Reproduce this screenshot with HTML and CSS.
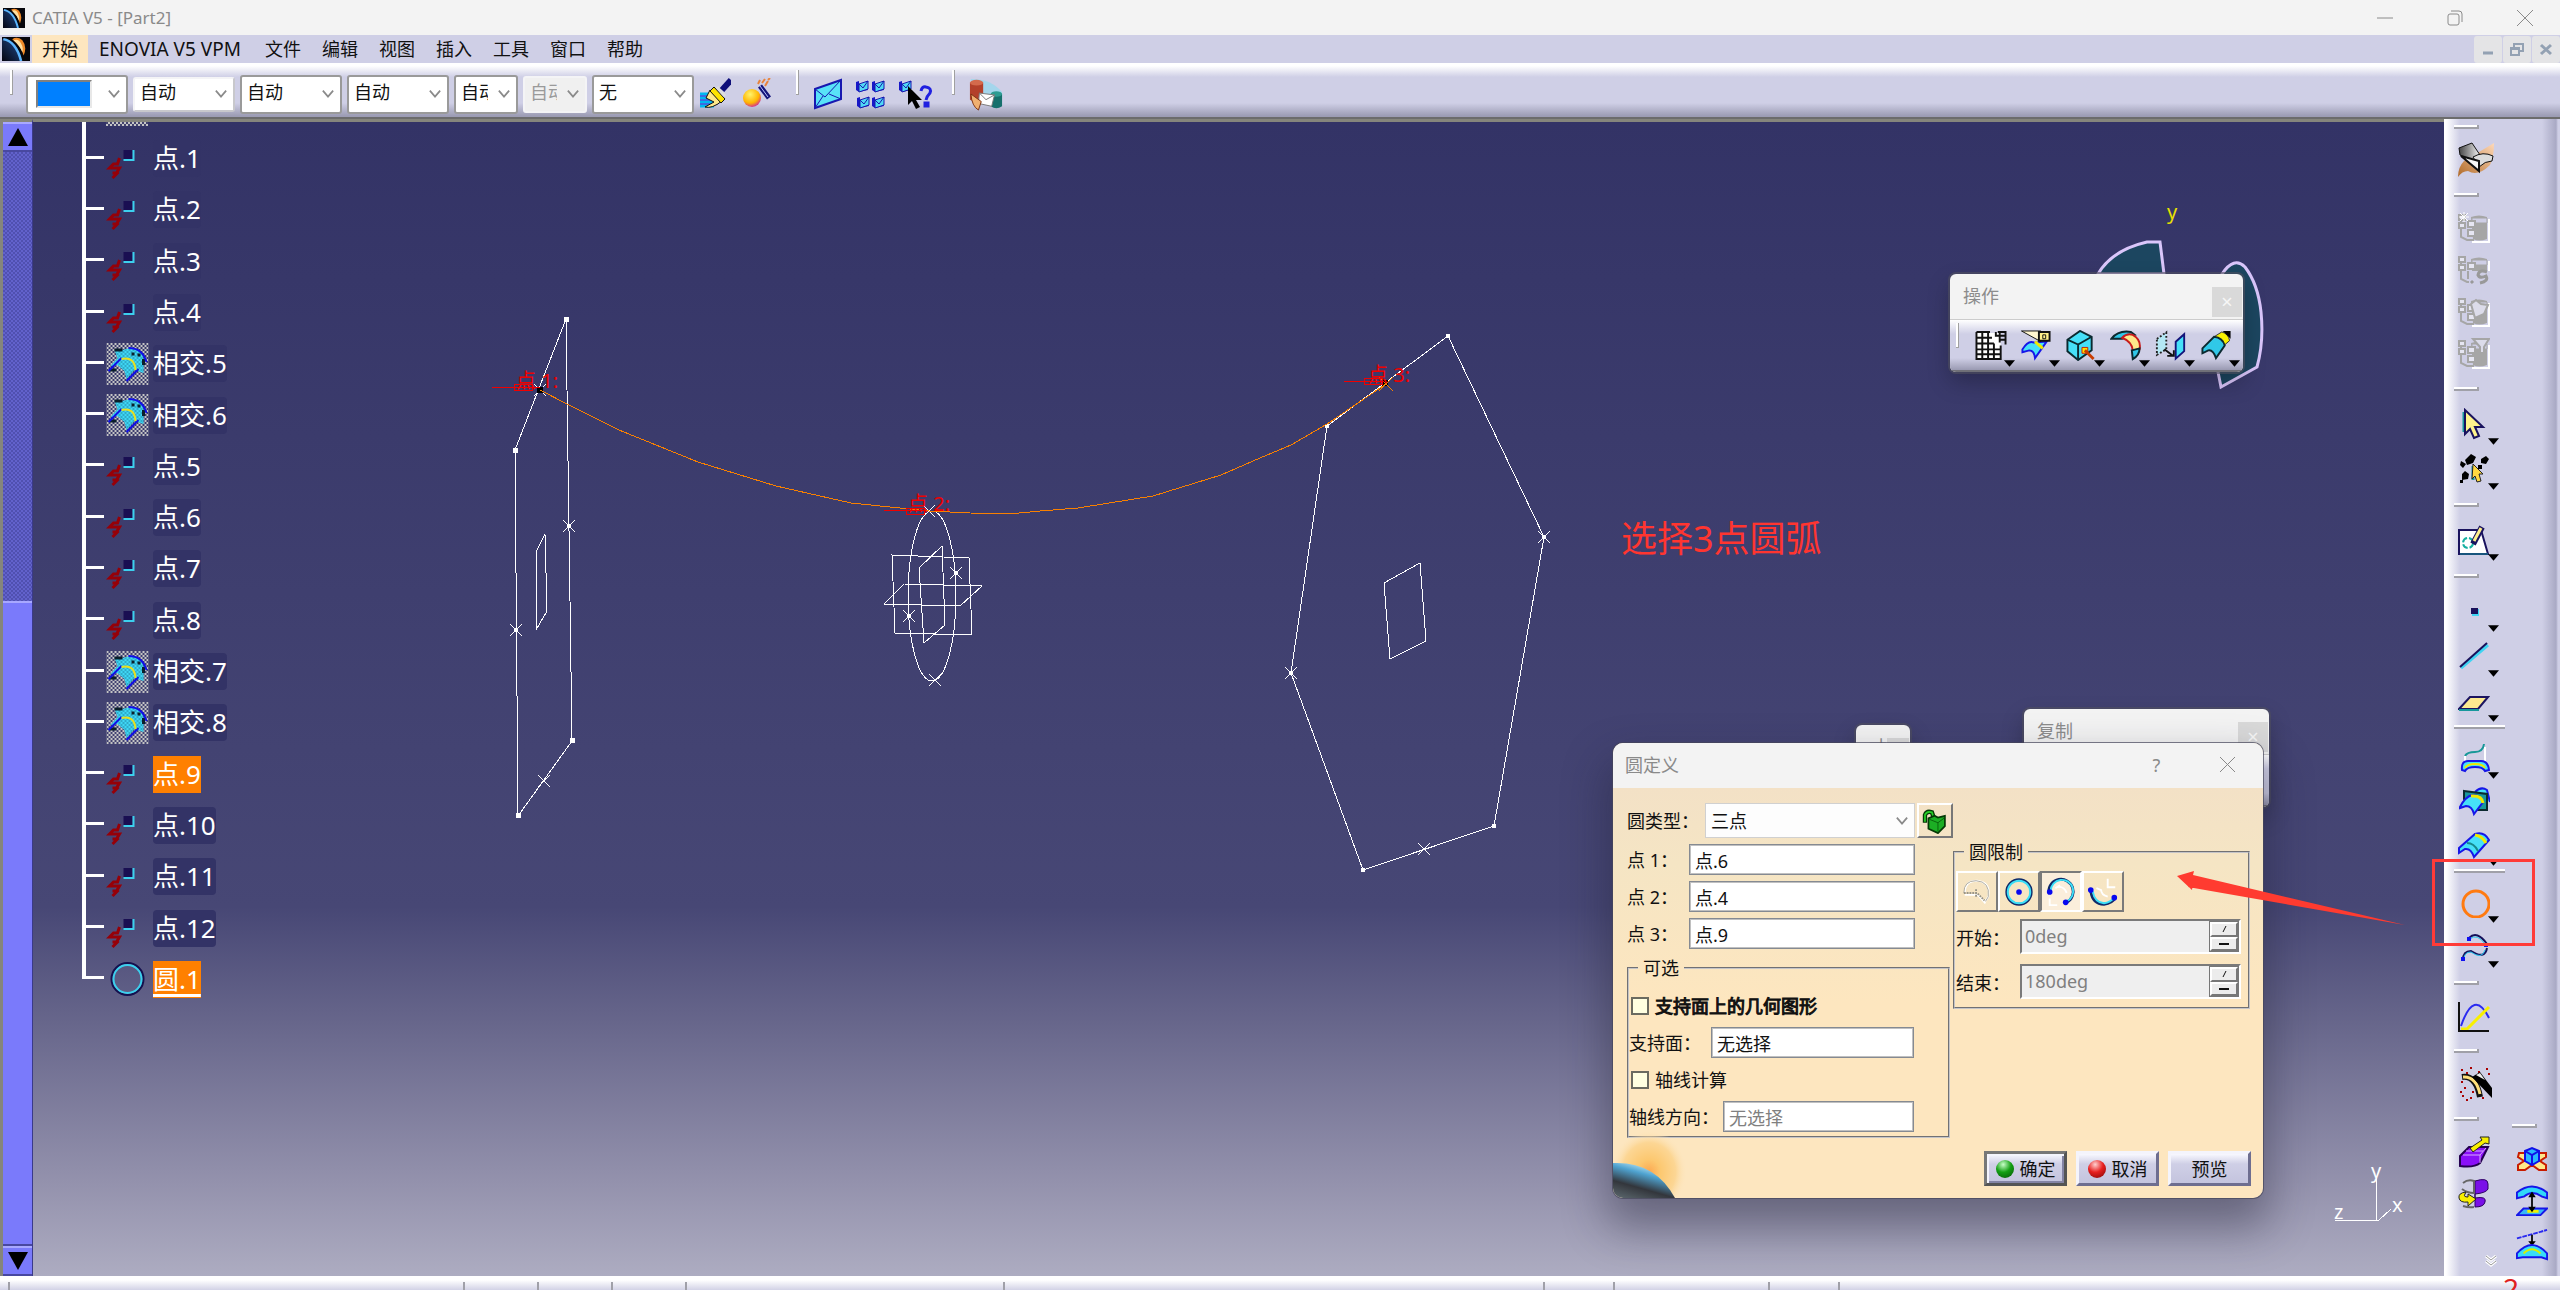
FILE: index.html
```html
<!DOCTYPE html>
<html lang="zh-CN">
<head>
<meta charset="utf-8">
<title>CATIA V5 - [Part2]</title>
<link rel="stylesheet" href="styles.css">
</head>
<body>
<svg class="defs" aria-hidden="true">
  <defs>
    <linearGradient id="globe" x1="0" y1="1" x2="1" y2="0"><stop offset="0" stop-color="#050510"/><stop offset="0.6" stop-color="#16305c"/><stop offset="1" stop-color="#58b4f0"/></linearGradient>
    <linearGradient id="metal" x1="0" x2="1"><stop offset="0" stop-color="#444"/><stop offset="1" stop-color="#f4f4f4"/></linearGradient>
    <linearGradient id="copper" x1="0" x2="1" y1="1" y2="0"><stop offset="0" stop-color="#b06a28"/><stop offset="1" stop-color="#ffd9b8"/></linearGradient>
    <radialGradient id="ball" cx="0.4" cy="0.3" r="0.8"><stop offset="0" stop-color="#fff36a"/><stop offset="0.6" stop-color="#ffb400"/><stop offset="1" stop-color="#c400c4"/></radialGradient>
    <radialGradient id="sun"><stop offset="0" stop-color="#fda850"/><stop offset="0.3" stop-color="#fcc870"/><stop offset="0.7" stop-color="#fcd694"/><stop offset="1" stop-color="#fde6bf" stop-opacity="0"/></radialGradient>
    <linearGradient id="planet" x1="0" y1="1" x2="0.5" y2="0"><stop offset="0" stop-color="#5d6a70"/><stop offset="0.4" stop-color="#33363c"/><stop offset="0.75" stop-color="#4fa3d0"/><stop offset="1" stop-color="#c8ecf8"/></linearGradient>
    <pattern id="dots" width="4" height="4" patternUnits="userSpaceOnUse"><path d="M0 0h2v2H0zM2 2h2v2H2z" fill="#c4c4c4"/></pattern>
    <pattern id="dither" width="4" height="4" patternUnits="userSpaceOnUse"><path d="M0 0h2v2H0zM2 2h2v2H2z" fill="#1f7f9c"/></pattern>
  </defs>
  <symbol id="i-app" viewBox="0 0 22 22" preserveAspectRatio="none"><path fill="#07070c" d="M0 0h22v22H0z"/><path fill="url(#globe)" d="M0 2q10 2 15 20H0z"/><path d="M1 2q10 2 14 20" fill="none" stroke="#5cb6ff" stroke-width="2"/><path d="M8 2q4-3 8 1 4 6 1 14-2-9-9-15z" fill="#f08a28"/><path d="M9 3q4-2 6 3 2 4 1 8-2-6-7-11z" fill="#ffe0a0"/></symbol>
  <symbol id="i-chev" viewBox="0 0 14 10"><path d="M1 1l6 7 6-7" fill="none" stroke="currentColor" stroke-width="2"/></symbol>
  <symbol id="i-drop" viewBox="0 0 12 7"><path d="M0 0h12L6 7z"/></symbol>
  <symbol id="t-point" viewBox="0 0 42 42"><path fill="#1a0f52" d="M17 12h9v9h-9z"/><path d="M17 22h10V12" fill="none" stroke="#3cd0ee" stroke-width="2"/><path d="M13 20l-2 6H7l-4 4h10l-3 5H6M12 34l-6 6" fill="none" stroke="#960008" stroke-width="3"/></symbol>
  <symbol id="t-inter" viewBox="0 0 42 42"><path fill="url(#dots)" d="M0 0h42v42H0z"/><path d="M8 7h8l8-2q10 1 13 10v15l-9-3-8 9-2-8-7-6-7 1 7-8z" fill="#3fd7f5"/><path d="M8 7h8l8-2q10 1 13 10v15l-9-3-8 9-2-8-7-6-7 1 7-8z" fill="url(#dither)" opacity="0.5"/><path d="M8 7h8M25 11h3M31 12h3M37 16v6M3 27h7" stroke="#0b1f2a" stroke-width="3"/><path d="M22 5q14 0 18 14M2 28L15 15M20 38l12-12" fill="none" stroke="#1010e8" stroke-width="2"/><path d="M15 16q13-3 14 11" fill="none" stroke="#e8e020" stroke-width="2"/></symbol>
  <symbol id="t-circle" viewBox="0 0 42 42"><circle cx="21" cy="21" r="16" fill="none" stroke="#14104e" stroke-width="2"/><circle cx="21" cy="21" r="14" fill="none" stroke="#3cd0ee" stroke-width="2"/></symbol>
  <symbol id="i-brush" viewBox="0 0 32 32"><path d="M1 16h15M1 20h16M1 24h16M1 28h14" stroke="#00b8f0" stroke-width="3"/><path d="M1 18h14M1 22h14M1 26h18" stroke="#1414d8" stroke-width="1"/><path d="M11 12l12 11q-10 8-17 6l9-5-8-4z" fill="#ffe98a" stroke="#111"/><path d="M15 9l11 12-4 4L11 13z" fill="#ffe400" stroke="#111"/><path d="M18 9l8 9" stroke="#ddd" stroke-width="3"/><path d="M23 12L32 2" stroke="#10107a" stroke-width="6"/></symbol>
  <symbol id="i-wand" viewBox="0 0 32 32"><circle cx="10" cy="20" r="9" fill="url(#ball)"/><path d="M18 8l9 12" stroke="#14147a" stroke-width="5"/><path d="M18 8l8 11" stroke="#b8c4ff"/><path d="M16 6l2-4M20 5l3-4M23 8l3-5M26 2l2-2" stroke="#e8843c" stroke-width="2"/></symbol>
  <symbol id="i-mail" viewBox="0 0 32 32"><path d="M3 11L29 2v19L3 30z" fill="#58e2f8" stroke="#1818b0" stroke-width="2"/><path d="M3 11l10 8L29 2M3 30l8-12M29 21l-12-5" fill="none" stroke="#1818b0"/></symbol>
  <symbol id="i-mail-s" viewBox="0 0 16 16"><path d="M1 4l3-1v5l9-5v9l-9 2-3-2z" fill="#1818c8"/><path d="M4 6l9-3v8l-9 3z" fill="#50d8f4" stroke="#1818b0"/><path d="M4 6l4 4 5-7" fill="none" stroke="#1818b0"/></symbol>
  <symbol id="i-mails" viewBox="0 0 32 32"><use href="#i-mail-s" x="0" y="0" width="16" height="16"/><use href="#i-mail-s" x="16" y="0" width="16" height="16"/><use href="#i-mail-s" x="1" y="16" width="16" height="16"/><use href="#i-mail-s" x="16" y="16" width="16" height="16"/></symbol>
  <symbol id="i-help" viewBox="0 0 36 32"><use href="#i-mail-s" x="0" y="0" width="16" height="16"/><path d="M10 8v19l4-4 4 8 4-2-4-7h6z"/><path d="M23 13q1-5 5-4q6 1 4 6q-3 3-4 7M27 25h3v3h-3z" fill="none" stroke="#2020e0" stroke-width="3"/></symbol>
  <symbol id="i-db" viewBox="0 0 36 36"><path d="M2 2q22 0 33 14v8L2 14z" fill="#a4d6ec"/><path d="M1 6q7-4 14 0v18q-7 4-14 0z" fill="#b3402a"/><ellipse cx="8" cy="6" rx="7" ry="3" fill="#d46a4c"/><path d="M23 18q6-3 12 0v13q-6 4-12 0z" fill="#16706c"/><ellipse cx="29" cy="18" rx="6" ry="3" fill="#2e9c92"/><path d="M11 17l16 2-3 12-14-3z" fill="#fff" stroke="#777"/><path d="M11 17l7 7 9-5" fill="none" stroke="#777"/><path d="M2 18q1 13 8 17l3-9z" fill="#f0b070" stroke="#7a3010"/></symbol>
  <symbol id="i-gsd" viewBox="0 0 36 36"><path d="M0 35q0-10 6-16l30-18q0 14-4 22-12 12-22 6-6 0-10 6z" fill="url(#copper)"/><path d="M1 6l13-5 8 12-7 7L2 13z" fill="url(#metal)" stroke="#111"/><path d="M15 15q10-6 20-1l-1 5q-7 0-13 6z" fill="#dcdcdc" stroke="#111"/><path d="M3 14l18 5v10z" fill="#f7f7f7" stroke="#111" stroke-width="2"/></symbol>
  <symbol id="i-cat-base" viewBox="0 0 32 32"><path d="M13 5q8-3 16 0v22q-8 3-14 0z" fill="#a6a6a6"/><path d="M14 6h15v5H14z" fill="#cfcfe6" stroke="#a6a6a6"/><path d="M3 7v18l6 3h7" fill="none" stroke="#a6a6a6" stroke-width="2"/><path d="M1 3h6v5H1zM1 11h6v5H1zM10 9h7v6h-7zM10 18h7v6h-7z" fill="#e6e6f2" stroke="#a6a6a6" stroke-width="2"/><path d="M14 30h17V7" fill="none" stroke="#fff" stroke-width="2"/></symbol>
  <symbol id="i-cat1" viewBox="0 0 32 32"><use href="#i-cat-base"/><path d="M6 0v10M1 5h10M2 1l8 8M10 1L2 9" stroke="#fff" stroke-width="1"/></symbol>
  <symbol id="i-cat2" viewBox="0 0 32 32"><use href="#i-cat-base"/><path d="M11 17h21v15H11z" fill="#cfcfe6"/><path d="M29 18q-8-3-9 3q2 4 8 1q3 5-6 7M13 27l2 2" fill="none" stroke="#999" stroke-width="3"/></symbol>
  <symbol id="i-cat3" viewBox="0 0 32 32"><use href="#i-cat-base"/><path d="M13 8l5-4 5 4 7 1-4 9-9 4z" fill="#dcdcea" stroke="#a6a6a6" stroke-width="2"/></symbol>
  <symbol id="i-cat4" viewBox="0 0 32 32"><use href="#i-cat-base"/><path d="M15 1h16l-5 8v6h-4V9z" fill="#dcdcea" stroke="#a6a6a6" stroke-width="2"/></symbol>
  <symbol id="i-arrow" viewBox="0 0 32 32"><path d="M6 4v20M14 22l3 8" stroke="#17989c" stroke-width="3"/><path d="M7 2l18 17h-8l4 9-5 2-4-9-5 5z" fill="#fff48c" stroke="#19125e" stroke-width="2"/></symbol>
  <symbol id="i-blob" viewBox="0 0 32 32"><path d="M13 1l5 3-3 6-6 2-2-5zM28 3l3 3-3 5-5-1v-4zM3 8l5 3-3 4-3-3zM7 18l4 3-1 5-6 1v-6zM2 27h3v3H2zM20 12h4v4h-4z"/><path d="M15 13v14" stroke="#17989c" stroke-width="3"/><path d="M15 11l10 10h-4l2 7-4 1-2-6-3 3z" fill="#ffd840" stroke="#222" stroke-width="1"/></symbol>
  <symbol id="i-sketch" viewBox="0 0 32 32"><path d="M1 6h22l7 24H1z" fill="#fff" stroke="#19125e" stroke-width="2"/><path d="M2 30h28" stroke="#17989c"/><circle cx="10" cy="19" r="5" fill="none" stroke="#17b0a0" stroke-width="2" stroke-dasharray="6 2"/><path d="M15 20L24 3" stroke="#19125e" stroke-width="6"/><path d="M16 17l7-13" stroke="#fff08a" stroke-width="3"/></symbol>
  <symbol id="i-dot" viewBox="0 0 32 32"><path d="M14 14h7v7h-7z" fill="#3ed4f2"/><path d="M13 13h7v6h-7z" fill="#19105a"/></symbol>
  <symbol id="i-line" viewBox="0 0 32 32"><path d="M3 28L30 5" stroke="#3ed4f2" stroke-width="3"/><path d="M2 27L29 3" stroke="#19105a" stroke-width="2"/></symbol>
  <symbol id="i-plane" viewBox="0 0 32 32"><path d="M12 12h18L20 24H1z" fill="#fdea90" stroke="#1c1460" stroke-width="2"/><path d="M1 25h20" stroke="#17989c" stroke-width="2"/></symbol>
  <symbol id="i-proj" viewBox="0 0 32 32"><path d="M7 14q2-4 10-4q8 0 9-8" fill="none" stroke="#179898" stroke-width="2"/><path d="M7 14v9M27 5v16" stroke="#fff" stroke-width="2"/><path d="M4 28q-1-9 6-9h13q7 0 8 9l-4 1q-2-4-10-4t-10 4z" fill="#46e0f8" stroke="#1616e8" stroke-width="2"/><path d="M7 26q2-4 10-4t10 4" fill="none" stroke="#f0e800" stroke-width="2"/></symbol>
  <symbol id="i-inter" viewBox="0 0 32 32"><path d="M17 5q6-6 12-2l3 12" fill="#46e0f8" stroke="#1616e8" stroke-width="2"/><path d="M6 4l23 3v16H18L6 12z" fill="#17989c" stroke="#0b2a30" stroke-width="2"/><path d="M2 20q5-10 12-12q9 0 11 7l-9 12q-2-8-8-8l-6 2z" fill="#46e0f8" stroke="#1616e8" stroke-width="2"/><path d="M13 9q11-1 12 7" fill="none" stroke="#f0e800" stroke-width="3"/></symbol>
  <symbol id="i-surf" viewBox="0 0 32 32"><path d="M1 18L17 4q9-3 14 6L16 27q-3-9-9-8l-6 4z" fill="#46e0f8" stroke="#1616e8" stroke-width="2"/><path d="M17 5q7 1 11 8" fill="none" stroke="#f0e800" stroke-width="3"/><path d="M9 13q7 0 11 8" fill="none" stroke="#16888c" stroke-width="2"/></symbol>
  <symbol id="i-circ" viewBox="0 0 32 32"><circle cx="18" cy="18" r="13" fill="none" stroke="#ff7a10" stroke-width="3"/></symbol>
  <symbol id="i-spline" viewBox="0 0 32 32"><path d="M5 29q0-9 8-9q14 9 16-3M11 7q8-8 18 6" fill="none" stroke="#15105a" stroke-width="2"/><path d="M6 28q0-7 7-7q11 8 14-2M12 8q7-6 15 5" fill="none" stroke="#28c8f0" stroke-width="1"/><path d="M3 26h4v4H3zM9 6h4v4H9zM26 12h4v4h-4z" fill="#1010f0"/></symbol>
  <symbol id="i-graph" viewBox="0 0 32 32"><path d="M3 26Q16-12 31 18" fill="none" stroke="#2a2af0" stroke-width="2"/><path d="M3 29h6L31 7" fill="none" stroke="#f8f000" stroke-width="3"/><path d="M1 2v29h30" fill="none" stroke="#111" stroke-width="2"/></symbol>
  <symbol id="i-spray" viewBox="0 0 36 36"><path d="M3 4h2M12 2h2M20 6h2M28 3h2M3 16h2M4 30h2M14 26h2M6 22h2M12 32h2M24 32h2M30 8h2M2 26h2M8 34h2M8 7h2" stroke="#a80000" stroke-width="2"/><path d="M4 11q14-2 18 20" fill="none" stroke="#111" stroke-width="6"/><path d="M5 11q13-1 17 17" fill="none" stroke="#ffe07a" stroke-width="3"/><path d="M14 11l8-5 12 16v10z"/><path d="M18 9l4-2 5 7z" fill="#eee"/></symbol>
  <symbol id="i-extr" viewBox="0 0 32 32"><path d="M2 20l9-9h19l-8 16q-6 5-20 3z" fill="#8a10f8" stroke="#240050" stroke-width="2"/><path d="M5 19h17l6-7M8 15h17M22 19v8" fill="none" stroke="#d8a8ff" stroke-width="1"/><path d="M12 12L24 4l-2-3h9v7l-4-1-12 9z" fill="#f8f000" stroke="#222"/></symbol>
  <symbol id="i-cyl" viewBox="0 0 32 32"><path d="M17 3q13-4 13 3v5q-2 4-13 5v4q12-2 10 4-1 5-10 5z" fill="#7a10e8" stroke="#2c0060"/><path d="M5 5q5-4 11-2M4 11q5 4 12 4M5 28q6 2 11 1M16 2v14" fill="none" stroke="#666" stroke-width="2"/><path d="M8 14q-8 1-7 6t9 4v4l8-7-8-5v3q-5 0-3-3z" fill="#f8f000" stroke="#222"/></symbol>
  <symbol id="i-star" viewBox="0 0 32 32"><path d="M3 10h7l6 5 7-5h7v4l-6 4 6 4v5h-7l-7-5-7 5H2v-5l6-4-6-4z" fill="#ffe88a" stroke="#c81c00" stroke-width="2"/><path d="M9 8l7-3 7 3v10l-7 4-7-4z" fill="#28b8ff" stroke="#1010e8" stroke-width="2"/><path d="M9 8l7 4 7-4M16 12v9" fill="none" stroke="#1010e8" stroke-width="2"/></symbol>
  <symbol id="i-dist" viewBox="0 0 34 34"><path d="M1 14V8q16-13 32 0v6l-6-2q-10-7-18 0z" fill="#30d8f8" stroke="#1616e8" stroke-width="2"/><path d="M8 25h25l-7 7H1z" fill="#38b8f8" stroke="#1616e8" stroke-width="2"/><path d="M12 28h12" stroke="#f0f000" stroke-width="3"/><path d="M17 9v17" stroke="#111" stroke-width="2"/><path d="M17 7l4 6h-8zM17 29l4-6h-8z"/></symbol>
  <symbol id="i-curv" viewBox="0 0 34 34"><path d="M1 10L33 1" stroke="#2828f0" stroke-width="2" stroke-dasharray="5 1"/><path d="M17 6v9" stroke="#111" stroke-width="2"/><path d="M17 18l4-5h-8z"/><path d="M1 31V26q16-18 32 0v6l-6-2H7z" fill="#38dcf8" stroke="#1616e8" stroke-width="2"/><path d="M8 26q9-9 18 0" fill="none" stroke="#d8f000" stroke-width="2"/></symbol>
  <symbol id="i-more" viewBox="0 0 12 12"><path d="M1 1l5 4 5-4M1 6l5 4 5-4" fill="none" stroke="#fff" stroke-width="3"/><path d="M1 1l5 4 5-4M1 6l5 4 5-4" fill="none" stroke="#999"/></symbol>
  <symbol id="i-join" viewBox="0 0 32 32"><path d="M1 3h25v27H1z" fill="#fff"/><path d="M1 2v28h25V16M1 2h14M7 2v28M13 2v28M19 14v16M1 8h16M1 14h18M1 20h25M1 25h25M23 2h8v13M21 2v4h9M25 2v11M25 10h6" fill="none" stroke="#111" stroke-width="2"/></symbol>
  <symbol id="i-cut" viewBox="0 0 32 32"><path d="M2 20q6-10 12-7l13-1-12 17q-1-8-6-8l-7 2z" fill="#46e0f8" stroke="#1616e8" stroke-width="2"/><path d="M15 12l8 7" stroke="#f0e800" stroke-width="3"/><path d="M1 1h20v11z" fill="#fff6d0" stroke="#111"/><path d="M19 2h11v9H19z" fill="#fff08a" stroke="#111" stroke-width="2"/><path d="M23 5h3v4h-3z" fill="none" stroke="#111"/></symbol>
  <symbol id="i-cube" viewBox="0 0 32 32"><path d="M2 10L15 1l12 6v14L13 31 2 22z" fill="#46e0f8" stroke="#0b2a30" stroke-width="2"/><path d="M2 10l11 5 14-8M13 15v16" fill="none" stroke="#0b2a30" stroke-width="2"/><path d="M17 18h6v6h-6z" fill="#ffe000" stroke="#c82000"/><path d="M20 21l9 9" stroke="#c83c00" stroke-width="3"/></symbol>
  <symbol id="i-fillet" viewBox="0 0 32 32"><path d="M1 9q7-9 20-7l4 3-13 4z" fill="#30c8e8" stroke="#0b2a30" stroke-width="2"/><path d="M12 8q5-5 11-3 9 5 7 15l-7 1q-1-9-11-13z" fill="#ffe88a" stroke="#c81c1c" stroke-width="2"/><path d="M22 21l8-2q0 7-7 11z" fill="#30c8e8" stroke="#0b2a30" stroke-width="2"/></symbol>
  <symbol id="i-sym" viewBox="0 0 34 32"><path d="M2 9l10-7v18L2 26z" fill="#b4e8f4" stroke="#222" stroke-width="2" stroke-dasharray="2 2"/><path d="M22 12l9-8v18l-9 8z" fill="#46e0f8" stroke="#14147a" stroke-width="2"/><path d="M10 20l9 7M13 27h7v-6" fill="none" stroke="#111" stroke-width="2"/></symbol>
  <symbol id="i-extrap" viewBox="0 0 32 32"><path d="M14 7l8-5q7 2 8 9l-7 6q-2-8-9-10z" fill="#f8f000" stroke="#333"/><path d="M2 19L14 7q9 1 11 9L16 29q-3-9-8-8l-6 3z" fill="#30c8e8" stroke="#0b2a30" stroke-width="2"/><path d="M23 1h8v8z"/></symbol>
  <symbol id="i-lock" viewBox="0 0 30 30"><path d="M4 17V8q2-5 8-3l2 6" fill="none" stroke="#063a06" stroke-width="5"/><path d="M4 16V8q2-5 8-3l2 6" fill="none" stroke="#28d028" stroke-width="2"/><path d="M8 12l7-3 4 2 8-2v12l-8 8-11-5z" fill="#1cae24" stroke="#063a06" stroke-width="2"/><path d="M9 13l10 4 8-6M19 17v10" fill="none" stroke="#085a08"/></symbol>
  <symbol id="i-c1" viewBox="0 0 34 34"><path d="M4 18q0-13 13-13 15 2 12 17-2 4-5 6M4 20h14l8 9" fill="none" stroke="#fff" stroke-width="2"/><path d="M3 18q0-13 13-13 15 1 13 17l-3 5" fill="none" stroke="#aaa69a" stroke-width="1"/><path d="M3 18h14l8 8M16 14v8" fill="none" stroke="#999588" stroke-width="2" stroke-dasharray="2 1"/></symbol>
  <symbol id="i-c2" viewBox="0 0 34 34"><circle cx="17" cy="17" r="13" fill="none" stroke="#102a68" stroke-width="3"/><circle cx="17" cy="17" r="12" fill="none" stroke="#3ce0f8" stroke-width="2"/><circle cx="17" cy="17" r="3" fill="#0808f0"/></symbol>
  <symbol id="i-c3" viewBox="0 0 34 34"><path d="M4 17a13 13 0 1 1 19 11" fill="none" stroke="#102a68" stroke-width="3"/><path d="M6 16a12 12 0 1 1 17 11" fill="none" stroke="#3ce0f8" stroke-width="2"/><path d="M11 13l5-3M12 12q8-2 11 6M5 24v7h8" fill="none" stroke="#fff" stroke-width="2"/><circle cx="5" cy="17" r="3" fill="#0808f0"/><circle cx="22" cy="28" r="3" fill="#0808f0"/></symbol>
  <symbol id="i-c4" viewBox="0 0 34 34"><path d="M4 16q2 14 14 14 9-1 12-7" fill="none" stroke="#102a68" stroke-width="3"/><path d="M6 16q2 12 12 13 7-1 11-6" fill="none" stroke="#3ce0f8" stroke-width="2"/><path d="M22 3v9h8M10 13l5 2q0 5 7 7" fill="none" stroke="#fff" stroke-width="2"/><circle cx="4" cy="15" r="3" fill="#0808f0"/><circle cx="29" cy="23" r="3" fill="#0808f0"/></symbol>
  <symbol id="mk" viewBox="0 0 14 14"><path d="M1 1l12 12M13 1L1 13" stroke="currentColor"/></symbol>
</svg>

<header class="titlebar">
  <svg class="app-icon"><use href="#i-app"/></svg>
  <span class="title-text">CATIA V5 - [Part2]</span>
  <div class="win-buttons">
    <button aria-label="最小化"><svg width="16" height="16"><path d="M0 8h16" stroke="#8a8a8a" stroke-width="1"/></svg></button>
    <button aria-label="还原"><svg width="16" height="16" fill="none" stroke="#8a8a8a" stroke-width="1"><rect x="1" y="4" width="11" height="11" rx="2"/><path d="M4 1h8q3 0 3 3v8"/></svg></button>
    <button aria-label="关闭"><svg width="16" height="16"><path d="M0 0l16 16M16 0L0 16" stroke="#8a8a8a"/></svg></button>
  </div>
</header>

<nav class="menubar">
  <svg class="doc-icon"><use href="#i-app"/></svg>
  <button class="menu active">开始</button>
  <button class="menu latin">ENOVIA V5 VPM</button>
  <button class="menu">文件</button>
  <button class="menu">编辑</button>
  <button class="menu">视图</button>
  <button class="menu">插入</button>
  <button class="menu">工具</button>
  <button class="menu">窗口</button>
  <button class="menu">帮助</button>
  <div class="mdi-buttons">
    <button aria-label="最小化文档"><svg width="14" height="14"><path d="M2 11h10" stroke="#93a1b3" stroke-width="3"/></svg></button>
    <button aria-label="还原文档"><svg width="14" height="14" fill="none" stroke="#93a1b3" stroke-width="2"><path d="M4 5V2h9v7h-3M1 6h8v7H1zM1 7h8"/></svg></button>
    <button aria-label="关闭文档"><svg width="14" height="14"><path d="M2 3l10 9M12 3L2 12" stroke="#93a1b3" stroke-width="3"/></svg></button>
  </div>
</nav>

<div class="toolbar">
  <span class="grip"></span>
  <div class="combo"><select aria-label="颜色"><option></option></select><span class="swatch"></span><svg class="chev"><use href="#i-chev"/></svg></div>
  <div class="combo flat"><select aria-label="透明度"><option>自动</option></select><svg class="chev"><use href="#i-chev"/></svg></div>
  <div class="combo"><select aria-label="线宽"><option>自动</option></select><svg class="chev"><use href="#i-chev"/></svg></div>
  <div class="combo"><select aria-label="线型"><option>自动</option></select><svg class="chev"><use href="#i-chev"/></svg></div>
  <div class="combo small"><select aria-label="点符号"><option>自动</option></select><svg class="chev"><use href="#i-chev"/></svg></div>
  <div class="combo small off"><select aria-label="渲染" disabled><option>自动</option></select><svg class="chev"><use href="#i-chev"/></svg></div>
  <div class="combo"><select aria-label="图层"><option>无</option></select><svg class="chev"><use href="#i-chev"/></svg></div>
  <button class="tb" aria-label="格式刷"><svg><use href="#i-brush"/></svg></button>
  <button class="tb" aria-label="向导"><svg><use href="#i-wand"/></svg></button>
  <span class="grip mid"></span>
  <button class="tb" aria-label="发送"><svg><use href="#i-mail"/></svg></button>
  <button class="tb" aria-label="全部发送"><svg><use href="#i-mails"/></svg></button>
  <button class="tb wide" aria-label="这是什么"><svg><use href="#i-help"/></svg></button>
  <span class="grip mid"></span>
  <button class="tb wide" aria-label="数据库"><svg><use href="#i-db"/></svg></button>
</div>

<main class="work">
  <div class="scroll" aria-hidden="true">
    <div class="sc-btn"><svg width="20" height="18"><path d="M10 0l10 18H0z"/></svg></div>
    <div class="sc-track"></div>
    <div class="sc-thumb"></div>
    <div class="sc-btn"><svg width="20" height="18"><path d="M0 0h20L10 18z"/></svg></div>
  </div>

  <section class="viewport">
    <svg class="scene">
      <g transform="translate(-33 -122)">
        <g class="wire">
          <path d="M566 319L515 450 518 816 572 741z"/>
          <path d="M545 534L536 552V630L547 611z"/>
          <ellipse cx="932" cy="596" rx="24" ry="85"/>
          <path d="M892 555L969 558 972 635 895 633z"/>
          <path d="M884 604L904 584 982 586 960 606z"/>
          <path d="M942 546L919 568 924 643 945 625z"/>
          <path d="M1448 336L1544 537 1494 826 1363 870 1291 673 1327 426z"/>
          <path d="M1420 563L1384 583 1390 659 1426 641z"/>
        </g>
        <path class="nodes" d="M564 317h5v5h-5zM513 448h5v5h-5zM516 813h5v5h-5zM570 738h5v5h-5zM1446 334h4v4h-4zM1325 424h4v4h-4zM1492 824h4v4h-4zM1361 868h4v4h-4zM567 524h4v4h-4zM514 628h4v4h-4zM954 571h4v4h-4zM907 614h4v4h-4zM1542 535h4v4h-4zM1289 671h4v4h-4z"/>
        <g class="marks">
          <use href="#mk" x="533" y="383" width="14" height="14"/><use href="#mk" x="562" y="519" width="14" height="14"/><use href="#mk" x="509" y="623" width="14" height="14"/><use href="#mk" x="537" y="774" width="14" height="14"/>
          <use href="#mk" x="922" y="504" width="14" height="14"/><use href="#mk" x="949" y="566" width="14" height="14"/><use href="#mk" x="902" y="609" width="14" height="14"/><use href="#mk" x="928" y="673" width="14" height="14"/>
          <use href="#mk" x="1537" y="530" width="14" height="14"/><use href="#mk" x="1284" y="666" width="14" height="14"/><use href="#mk" x="1417" y="842" width="14" height="14"/>
        </g>
        <path d="M537 387h6v6h-6zM1382 380h6v6h-6z"/>
        <path class="arc" d="M540 390L567 404 619 430 698 462 776 486 851 503 929 511 970 513 1009 514 1040 511 1078 508 1153 496 1221 475 1260 458 1291 445 1327 424 1386 384M1379 377l14 14M1393 377l-14 14"/>
        <g class="tags">
          <path d="M492 387h48M884 510h42M1344 381h40M514 384h18v6h-18zM517 387h20M906 508h18v6h-18zM1364 378h18v6h-18zM1368 381h16"/>
          <text x="516" y="388">点 1:</text><text x="908" y="511">点 2:</text><text x="1368" y="382">点 3:</text>
        </g>
        <path class="compass" d="M2098 274q14-24 49-32h13l4 32zM2222 274q12-18 23-7q13 17 16 45q3 30-4 55l-36 20-3-15z"/>
        <text class="cy" x="2167" y="219">y</text>
        <path class="axis" d="M2376 1178v42M2335 1220h44l12-11"/>
        <g class="axis-t"><text x="2371" y="1178">y</text><text x="2334" y="1219">z</text><text x="2392" y="1212">x</text></g>
      </g>
    </svg>

    <ul class="tree">
      <li><svg><use href="#t-point"/></svg><span>点.1</span></li>
      <li><svg><use href="#t-point"/></svg><span>点.2</span></li>
      <li><svg><use href="#t-point"/></svg><span>点.3</span></li>
      <li><svg><use href="#t-point"/></svg><span>点.4</span></li>
      <li><svg><use href="#t-inter"/></svg><span>相交.5</span></li>
      <li><svg><use href="#t-inter"/></svg><span>相交.6</span></li>
      <li><svg><use href="#t-point"/></svg><span>点.5</span></li>
      <li><svg><use href="#t-point"/></svg><span>点.6</span></li>
      <li><svg><use href="#t-point"/></svg><span>点.7</span></li>
      <li><svg><use href="#t-point"/></svg><span>点.8</span></li>
      <li><svg><use href="#t-inter"/></svg><span>相交.7</span></li>
      <li><svg><use href="#t-inter"/></svg><span>相交.8</span></li>
      <li><svg><use href="#t-point"/></svg><span class="picked">点.9</span></li>
      <li><svg><use href="#t-point"/></svg><span>点.10</span></li>
      <li><svg><use href="#t-point"/></svg><span>点.11</span></li>
      <li><svg><use href="#t-point"/></svg><span>点.12</span></li>
      <li><svg><use href="#t-circle"/></svg><span class="picked current">圆.1</span></li>
    </ul>
    <span class="tree-cut"></span>

    <p class="note">选择3点圆弧</p>

    <section class="palette ops">
      <header><span>操作</span><button aria-label="关闭操作">×</button></header>
      <div class="palette-row">
        <span class="grip"></span>
        <button class="pb" aria-label="接合"><svg><use href="#i-join"/></svg><svg class="drop"><use href="#i-drop"/></svg></button>
        <button class="pb" aria-label="分割"><svg><use href="#i-cut"/></svg><svg class="drop"><use href="#i-drop"/></svg></button>
        <button class="pb" aria-label="提取"><svg><use href="#i-cube"/></svg><svg class="drop"><use href="#i-drop"/></svg></button>
        <button class="pb" aria-label="圆角"><svg><use href="#i-fillet"/></svg><svg class="drop"><use href="#i-drop"/></svg></button>
        <button class="pb" aria-label="对称"><svg><use href="#i-sym"/></svg><svg class="drop"><use href="#i-drop"/></svg></button>
        <button class="pb" aria-label="外插延伸"><svg><use href="#i-extrap"/></svg><svg class="drop"><use href="#i-drop"/></svg></button>
      </div>
    </section>

    <section class="palette tiny"><header><span>寸</span><button aria-label="关闭">×</button></header></section>
    <section class="palette copy"><header><span>复制</span><button aria-label="关闭复制">×</button></header><div class="palette-row"></div></section>

    <form class="dialog">
      <header class="dlg-title"><h1>圆定义</h1>
        <button type="button" aria-label="帮助">?</button>
        <button type="button" aria-label="关闭"><svg width="17" height="17"><path d="M1 1l15 15M16 1L1 16" stroke="#888"/></svg></button>
      </header>
      <div class="dlg-body">
        <div class="left">
          <div class="row type"><label for="ctype">圆类型：</label><div class="combo-d"><select id="ctype"><option>三点</option></select><svg class="chev"><use href="#i-chev"/></svg></div><button type="button" class="lock" aria-label="锁定"><svg><use href="#i-lock"/></svg></button></div>
          <div class="row"><label for="p1">点 1：</label><input id="p1" value="点.6"></div>
          <div class="row"><label for="p2">点 2：</label><input id="p2" value="点.4"></div>
          <div class="row"><label for="p3">点 3：</label><input id="p3" value="点.9"></div>
          <fieldset class="optional">
            <legend>可选</legend>
            <div class="row"><input type="checkbox" id="geo"><label class="tick strong" for="geo">支持面上的几何图形</label></div>
            <div class="row support"><label for="sup">支持面：</label><input id="sup" value="无选择"></div>
            <div class="row"><input type="checkbox" id="axis"><label class="tick" for="axis">轴线计算</label></div>
            <div class="row direction"><label for="dir">轴线方向：</label><input id="dir" value="无选择" disabled></div>
          </fieldset>
        </div>
        <fieldset class="limits">
          <legend>圆限制</legend>
          <div class="modes">
            <button type="button" aria-label="部分弧"><svg><use href="#i-c1"/></svg></button>
            <button type="button" aria-label="全圆"><svg><use href="#i-c2"/></svg></button>
            <button type="button" class="on" aria-label="修剪圆"><svg><use href="#i-c3"/></svg></button>
            <button type="button" aria-label="补充圆"><svg><use href="#i-c4"/></svg></button>
          </div>
          <div class="row"><label for="start">开始：</label><div class="spin"><input id="start" value="0deg" disabled><div class="steps"><button type="button" aria-label="增加开始" disabled><svg width="10" height="8"><path d="M4 7l3-6" stroke="#111"/></svg></button><button type="button" aria-label="减少开始" disabled><svg width="10" height="8"><path d="M0 4h10" stroke="#111" stroke-width="2"/></svg></button></div></div></div>
          <div class="row"><label for="end">结束：</label><div class="spin"><input id="end" value="180deg" disabled><div class="steps"><button type="button" aria-label="增加结束" disabled><svg width="10" height="8"><path d="M4 7l3-6" stroke="#111"/></svg></button><button type="button" aria-label="减少结束" disabled><svg width="10" height="8"><path d="M0 4h10" stroke="#111" stroke-width="2"/></svg></button></div></div></div>
        </fieldset>
      </div>
      <footer class="dlg-foot">
        <svg class="corner" width="90" height="66"><ellipse cx="36" cy="40" rx="38" ry="42" fill="url(#sun)"/><path d="M0 31q42-2 62 35H0z" fill="url(#planet)"/></svg>
        <button type="button" class="ok"><i class="bead green"></i>确定</button>
        <button type="button"><i class="bead red"></i>取消</button>
        <button type="button">预览</button>
      </footer>
    </form>
    <svg class="pointer" width="230" height="60"><path d="M1 6L18 1l-1 4 212 50L12 17 17 13 16 20z"/></svg>
  </section>

  <aside class="side">
    <div class="col">
      <span class="sep"></span>
      <button class="sb" aria-label="工作台"><svg class="big"><use href="#i-gsd"/></svg></button>
      <span class="sep"></span>
      <button class="sb" aria-label="目录一"><svg><use href="#i-cat1"/></svg></button>
      <button class="sb" aria-label="目录二"><svg><use href="#i-cat2"/></svg></button>
      <button class="sb" aria-label="目录三"><svg><use href="#i-cat3"/></svg></button>
      <button class="sb" aria-label="目录四"><svg><use href="#i-cat4"/></svg></button>
      <span class="sep"></span>
      <button class="sb tall" aria-label="选择"><svg><use href="#i-arrow"/></svg><svg class="drop"><use href="#i-drop"/></svg></button>
      <button class="sb tall" aria-label="快速选择"><svg><use href="#i-blob"/></svg><svg class="drop"><use href="#i-drop"/></svg></button>
      <span class="sep"></span>
      <button class="sb tall" aria-label="草图"><svg><use href="#i-sketch"/></svg><svg class="drop"><use href="#i-drop"/></svg></button>
      <span class="sep"></span>
      <button class="sb tall" aria-label="点"><svg><use href="#i-dot"/></svg><svg class="drop"><use href="#i-drop"/></svg></button>
      <button class="sb tall" aria-label="直线"><svg><use href="#i-line"/></svg><svg class="drop"><use href="#i-drop"/></svg></button>
      <button class="sb tall" aria-label="平面"><svg><use href="#i-plane"/></svg><svg class="drop"><use href="#i-drop"/></svg></button>
      <span class="sep long"></span>
      <button class="sb tall" aria-label="投影"><svg><use href="#i-proj"/></svg><svg class="drop"><use href="#i-drop"/></svg></button>
      <button class="sb tall" aria-label="相交"><svg><use href="#i-inter"/></svg></button>
      <button class="sb" aria-label="平行曲线"><svg><use href="#i-surf"/></svg><svg class="drop"><use href="#i-drop"/></svg></button>
      <span class="sep long"></span>
      <button class="sb tall target" aria-label="圆"><svg><use href="#i-circ"/></svg><svg class="drop"><use href="#i-drop"/></svg></button>
      <button class="sb tall" aria-label="样条线"><svg><use href="#i-spline"/></svg><svg class="drop"><use href="#i-drop"/></svg></button>
      <span class="sep"></span>
      <button class="sb" aria-label="法则曲线"><svg><use href="#i-graph"/></svg></button>
      <span class="sep"></span>
      <button class="sb" aria-label="喷涂"><svg class="big"><use href="#i-spray"/></svg></button>
      <span class="sep"></span>
      <button class="sb" aria-label="拉伸"><svg><use href="#i-extr"/></svg></button>
      <button class="sb" aria-label="旋转"><svg><use href="#i-cyl"/></svg></button>
      <svg class="more"><use href="#i-more"/></svg>
    </div>
    <div class="col second">
      <span class="sep"></span>
      <button class="sb" aria-label="爆炸"><svg><use href="#i-star"/></svg></button>
      <button class="sb" aria-label="距离"><svg><use href="#i-dist"/></svg></button>
      <button class="sb tall" aria-label="曲率"><svg><use href="#i-curv"/></svg></button>
    </div>
  </aside>
</main>

<footer class="status">
  <span class="c0"></span><span class="c1"></span><span class="c2"></span><span class="c2"></span><span class="c2"></span><span class="c3"></span><span class="c4"></span><span class="c5"></span><span class="c6"></span><span class="c5"></span><span class="c7"></span>
  <b class="red-mark">2</b>
</footer>
</body>
</html>
```
FILE: styles.css
```css
*, *::before, *::after { box-sizing: border-box; }
body {
  margin: 0;
  height: 100vh;
  display: flex;
  flex-direction: column;
  overflow: hidden;
  background: #cfcfe6;
  color: #111;
  font: 18px/26px "Noto Sans", "Noto Sans CJK SC", sans-serif;
}
button, input, select { font: inherit; color: inherit; margin: 0; }
button { border: 0; padding: 0; background: none; }
svg { display: block; flex: none; }
.defs { position: absolute; width: 0; height: 0; }

/* title bar */
.titlebar { flex: none; height: 35px; display: flex; align-items: center; padding-left: 3px; background: #f3f3f3; color: #8a8a8a; }
.app-icon { width: 22px; height: 20px; margin-right: 7px; }
.title-text { font-size: 17px; }
.win-buttons { margin-left: auto; display: flex; }
.win-buttons button { width: 70px; height: 35px; display: flex; align-items: center; justify-content: center; }

/* menu bar */
.menubar { flex: none; height: 28px; display: flex; align-items: center; padding-left: 2px; background: #cfcfe6; }
.doc-icon { width: 28px; height: 24px; margin-right: 2px; }
.menu { height: 28px; padding: 0 10px; margin-right: 1px; }
.menu.latin { font-size: 19px; padding-right: 13px; }
.menu.active { background: #fde6bf; }
.mdi-buttons { margin-left: auto; display: flex; gap: 1px; }
.mdi-buttons button { width: 28px; height: 27px; display: flex; align-items: center; justify-content: center; background: #e4e4e6; border-radius: 3px; }

/* top tool bar */
.toolbar {
  flex: none; height: 56px; display: flex; align-items: center; gap: 5px; padding: 8px 0 0 10px;
  background: linear-gradient(#fff 0, #fff 3px, #cfcfe6 14px, #cfcfe6 40px, #9c9cb4 53px);
  border-bottom: 2px solid #6c6c6c;
}
.grip { flex: none; width: 3px; height: 25px; background: #fff; border-right: 1px solid #a0a0a0; border-bottom: 1px solid #a0a0a0; }
.toolbar .grip { margin: 0 8px 24px 0; }
.toolbar .grip.mid { margin-left: 11px; }
.combo { position: relative; width: 102px; height: 39px; background: #fff; border: 2px solid #9a9a9a; border-radius: 3px; }
.combo.flat { border-color: #f4f4f6 #c8c8cc #c8c8cc #f4f4f6; height: 35px; }
.combo.small { width: 64px; }
.combo.off { border-color: #f4f4f6; background: #f0f0f0; color: #9a9a9a; height: 37px; }
.combo select, .combo-d select { appearance: none; width: 100%; height: 100%; border: 0; background: none; padding: 0 22px 4px 5px; }
.combo select { padding-right: 28px; opacity: 1; }
.chev { position: absolute; right: 6px; top: 50%; width: 12px; height: 10px; margin-top: -5px; color: #8a8a8a; pointer-events: none; }
.swatch { position: absolute; left: 8px; top: 3px; width: 56px; height: 28px; background: #0080ff; border: 2px solid; border-color: #808080 #e8e8e8 #e8e8e8 #808080; }
.tb { flex: none; width: 38px; }
.tb svg { width: 32px; height: 32px; }
.tb.wide svg { width: 36px; height: 34px; }

/* work area */
.work { flex: 1; min-height: 0; display: flex; }
.scroll { flex: none; width: 33px; display: flex; flex-direction: column; border-left: 3px solid #85857c; border-top: 3px solid #85857c; border-right: 1px solid #3a3a8a; background: #7a7afb; }
.sc-btn { flex: none; height: 30px; display: flex; align-items: center; justify-content: center; border-top: 2px solid #a8a8ff; border-bottom: 2px solid #4848a0; }
.sc-track { flex: 451 1 0; background: repeating-conic-gradient(#5050b0 0 25%, #6262cc 0 50%) 0 0 / 4px 4px; }
.sc-thumb { flex: 644 1 0; border-top: 2px solid #a8a8ff; border-bottom: 2px solid #4848a0; }
.viewport {
  position: relative; flex: 1; min-width: 0; overflow: hidden; border-top: 3px solid #85857c;
  background: linear-gradient(#333366 0, #474775 68%, #67668b 78%, #9492ad 92%, #adacc1 100%);
}
.scene { position: absolute; left: 0; top: 0; width: 100%; height: 100%; }
.wire { fill: none; stroke: #fff; stroke-width: 1; shape-rendering: crispEdges; }
.nodes { fill: #fff; }
.marks { color: #fff; }
.arc { fill: none; stroke: #f88000; stroke-width: 1; shape-rendering: crispEdges; }
.tags path { fill: none; stroke: #f00000; shape-rendering: crispEdges; }
.tags text { fill: #f00000; font-size: 20px; }
.compass { fill: #1c4660; stroke: #dac6fb; stroke-width: 3; }
.cy { fill: #e8e000; font-size: 20px; }
.axis { fill: none; stroke: #fff; shape-rendering: crispEdges; }
.axis-t { fill: #fff; font-size: 20px; }

/* specification tree */
.tree { position: absolute; left: 49px; top: 11px; width: 160px; height: 872px; margin: 0; padding: 0; list-style: none; display: grid; grid-template-rows: repeat(17, 1fr); color: #fff; font-size: 26px; line-height: 37px; }
.tree li { position: relative; display: flex; align-items: center; padding-left: 24px; gap: 4px; }
.tree li::before { content: ""; position: absolute; left: 0; top: 0; bottom: 0; width: 4px; background: #fff; }
.tree li:first-child::before { top: -11px; }
.tree li:last-child::before { bottom: 50%; }
.tree li::after { content: ""; position: absolute; left: 0; top: 50%; width: 22px; height: 3px; margin-top: -3px; background: #fff; }
.tree svg { width: 43px; height: 42px; }
.tree span { height: 37px; padding: 0; background: #333366; border-radius: 4px; white-space: nowrap; }
.tree .picked { background: #ff8000; border-radius: 0; }
.tree .current { text-decoration: underline 3px; text-underline-offset: 5px; }
.tree-cut { position: absolute; left: 73px; top: 0; width: 42px; height: 4px; background: repeating-conic-gradient(#c4c4c4 0 25%, #44446e 0 50%) 0 0 / 4px 4px; }

.note { position: absolute; left: 1588px; top: 392px; margin: 0; font-size: 36px; line-height: 50px; color: #ff3530; }

/* floating palettes */
.palette { position: absolute; background: #f3f3f3; border-radius: 6px; overflow: hidden; box-shadow: 0 0 0 2px rgba(80, 80, 95, 0.6), 0 10px 22px rgba(0, 0, 0, 0.25); color: #8c8c8c; }
.palette header { height: 45px; display: flex; align-items: center; justify-content: space-between; padding-left: 13px; }
.palette header span { padding-bottom: 2px; }
.palette header button { width: 30px; height: 30px; margin: 10px 1px 0 0; background: #d9d9d9; color: #f6f6f6; font-size: 20px; }
.palette-row { height: 53px; display: flex; gap: 13px; align-items: center; padding-left: 6px; background: linear-gradient(#fff, #cfcfe6 14px, #cfcfe6 38px, #9a9ab2); border-top: 1px solid #ccc; border-bottom: 2px solid #707078; }
.palette-row .grip { margin: 0 -7px 20px 0; }
.pb { position: relative; width: 32px; height: 32px; }
.pb svg { width: 32px; height: 31px; }
.pb:first-of-type { margin-left: 10px; }
.drop { position: absolute; }
.pb .drop { left: 29px; bottom: -6px; width: 11px; height: 7px; }
.ops { left: 1917px; top: 152px; width: 293px; }
.tiny { left: 1823px; top: 603px; width: 54px; height: 60px; }
.copy { left: 1991px; top: 587px; width: 245px; }

/* dialog */
.dialog { position: absolute; left: 1580px; top: 621px; width: 650px; border-radius: 10px; overflow: hidden; background: linear-gradient(#f3e1c6 45px, #f5e5c4 120px, #fde6bf 260px); box-shadow: 0 0 0 1px rgba(70, 70, 90, 0.7), 0 24px 44px 6px rgba(30, 30, 50, 0.4); }
.dlg-title { height: 45px; display: flex; align-items: center; padding: 0 0 2px 12px; background: #f3f3f3; color: #8a8a8a; }
.dlg-title h1 { margin: 0 auto 0 0; font-size: 18px; font-weight: 400; }
.dlg-title button { width: 71px; height: 43px; display: flex; align-items: center; justify-content: center; }
.dlg-body { display: grid; grid-template-columns: 326px 1fr; align-items: start; padding: 15px 13px 0 14px; }
.left { display: flex; flex-direction: column; gap: 6px; }
.row { display: flex; align-items: center; height: 31px; }
.row label { flex: none; width: 62px; white-space: nowrap; }
.row input:not([type="checkbox"]) { flex: none; width: 226px; height: 31px; padding: 0 5px; background: #fff; border: 1px solid #858a92; outline: 1px solid #c0c0c0; outline-offset: -2px; }
.row.type { height: 35px; }
.row.type label { width: 78px; }
.combo-d { position: relative; width: 210px; height: 35px; background: #fdfdfd; border: 1px solid #d0d0d0; }
.combo-d select { padding-bottom: 0; }
.lock { width: 36px; height: 35px; margin-left: 2px; border: 2px solid; border-color: #fff #777 #777 #fff; padding-left: 2px; }
.lock svg { width: 27px; height: 26px; }
fieldset { min-width: 0; margin: 0; padding: 0; border: 2px groove #c4c4c8; }
legend { height: 26px; padding: 0 5px; margin-left: 9px; }
.optional { width: 323px; margin-top: 0; padding: 9px 34px 4px 0; display: flex; flex-direction: column; }
.optional .row { margin-bottom: 6px; }
.optional .row:last-child { margin-bottom: 0; }
input[type="checkbox"] { appearance: none; width: 18px; height: 18px; margin: 0 6px 0 2px; background: #ffffe0; border: 2px solid #6b6b60; }
.row .tick { width: auto; }
.strong { -webkit-text-stroke: 1px #111; }
.support label { width: 82px; }
.row.support input:not([type="checkbox"]) { width: 203px; }
.direction label { width: 94px; }
.row.direction input:not([type="checkbox"]) { width: 191px; color: #808080; }
.limits { margin-top: 36px; padding: 6px 0 8px 1px; width: 297px; }
.limits legend { margin-left: 8px; }
.modes { display: flex; margin-bottom: 7px; }
.modes button { width: 42px; height: 41px; display: flex; align-items: center; justify-content: center; border: 2px solid; border-color: #fff #7a7a7a #7a7a7a #fff; }
.modes button.on { border-color: #7a7a7a #fff #fff #7a7a7a; background: #fbeedb; }
.modes svg { width: 32px; height: 32px; }
.limits .row { height: 35px; }
.limits .row + .row { margin-top: 10px; }
.limits .row label { width: 64px; padding-top: 3px; }
.spin { width: 221px; height: 35px; display: flex; background: #efefef; border: 2px solid; border-color: #7a7a7a #fff #fff #7a7a7a; }
.row .spin input:not([type="checkbox"]) { flex: 1; min-width: 0; height: 100%; border: 0; outline: 0; background: none; padding: 0 3px 2px; color: #808080; }
.steps { width: 30px; display: grid; grid-template-rows: 1fr 1fr; border: 1px solid #777; background: #777; }
.steps button { display: flex; align-items: center; justify-content: center; background: #ececec; border: 2px solid; border-color: #fff #777 #777 #fff; }
.dlg-foot { position: relative; display: flex; justify-content: flex-end; gap: 9px; padding: 13px 12px 12px 0; }
.dlg-foot button { width: 83px; height: 35px; display: flex; align-items: center; justify-content: center; gap: 6px; background: linear-gradient(#f8f8ff, #cfcfe6 10px, #c4c4de); border: 3px solid; border-color: #f4f4fc #6e6e90 #6e6e90 #f4f4fc; }
.dlg-foot .ok { border-color: #777 #555 #555 #777; box-shadow: inset 2px 2px #f4f4fc, inset -2px -2px #8484a4; }
.bead { width: 18px; height: 18px; border-radius: 50%; }
.green { background: radial-gradient(circle at 40% 25%, #c8ffc8, #14a014 45%, #045004); }
.red { background: radial-gradient(circle at 40% 25%, #ffd0d0, #e82020 45%, #7a0404); }
.corner { position: absolute; left: 0; bottom: 0; }
.pointer { position: absolute; left: 2143px; top: 748px; fill: #ff3b30; }

/* right tool columns */
.side { position: relative; flex: none; width: 116px; display: flex; padding-left: 8px; border-left: 2px solid #fff; background: linear-gradient(90deg, #fff 0, #cfcfe6 14px, #cfcfe6 96px, #a9a9c4 110px, #cfcfe6 112px); }
.col { flex: none; width: 58px; display: flex; flex-direction: column; padding-top: 6px; }
.sep { flex: none; width: 25px; height: 4px; margin: 12px 0 10px; background: #fff; border-bottom: 2px solid #a0a0a8; border-right: 2px solid #a0a0a8; }
.col > .sep:first-child { margin-top: 0; }
.sep.long { width: 51px; margin: 2px 0 6px; border-right: 0; }
.sb { position: relative; flex: none; width: 51px; height: 42px; display: flex; align-items: center; padding-left: 4px; }
.sb.tall { height: 45px; }
.sb svg { width: 32px; height: 32px; }
.sb svg.big { width: 36px; height: 36px; }
.sb .drop { left: 34px; bottom: 1px; width: 11px; height: 7px; }
.sb.target::before { content: ""; position: absolute; left: -22px; top: -20px; width: 103px; height: 87px; border: 3px solid #ff3b38; z-index: 2; }
.more { width: 12px; height: 12px; margin: auto 0 9px 31px; }
.second { width: 44px; justify-content: flex-end; padding-bottom: 9px; }

/* status bar */
.status { position: relative; flex: none; height: 14px; display: flex; padding-top: 6px; overflow: hidden; background: linear-gradient(#fff 4px, #d2d2e6 14px); }
.status span { flex: none; border-right: 2px solid #a0a0a8; }
.c0 { width: 10px; } .c1 { width: 455px; } .c2 { width: 74px; } .c3 { width: 318px; } .c4 { width: 540px; } .c5 { width: 70px; } .c6 { width: 155px; }
.status .c7 { border: 0; flex: 1; }
.red-mark { position: absolute; right: 41px; top: -2px; color: #e02020; font-size: 28px; line-height: 28px; font-weight: 400; }
```
